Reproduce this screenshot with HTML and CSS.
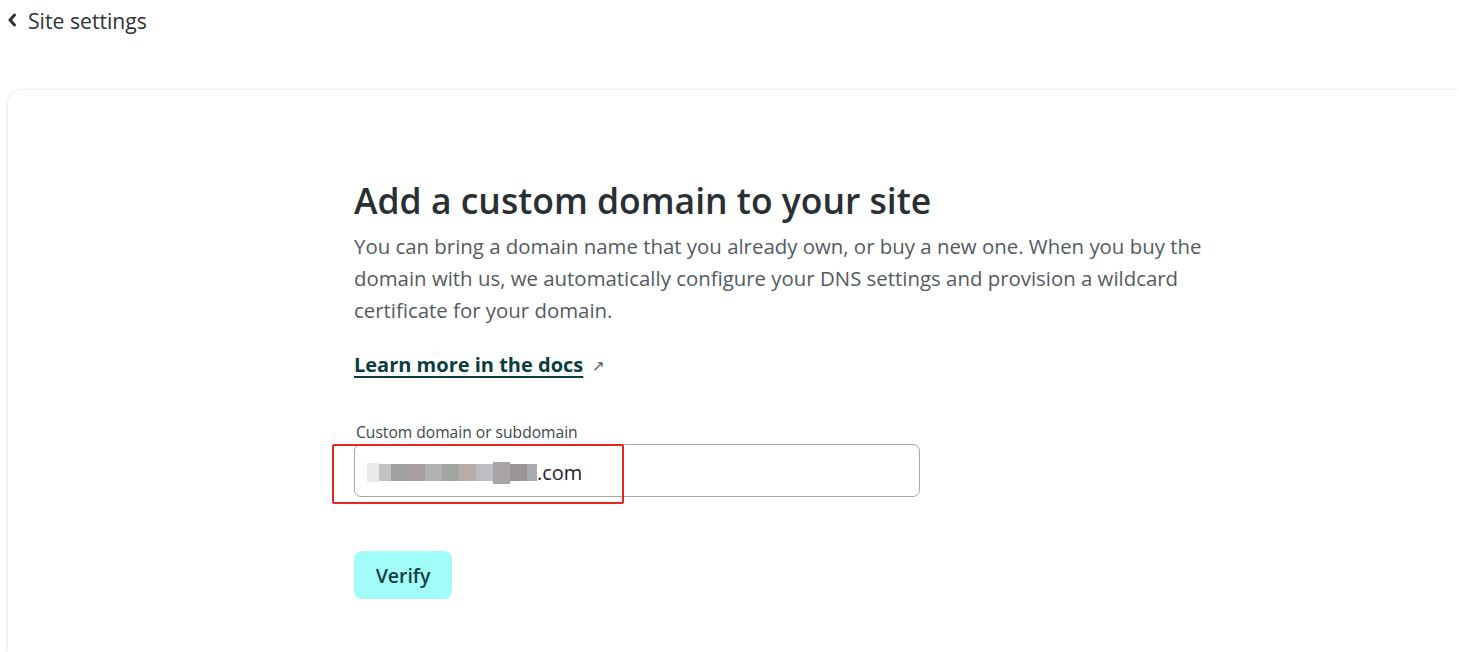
FILE: index.html
```html
<!DOCTYPE html>
<html>
<head>
<meta charset="utf-8">
<link rel="stylesheet" href="styles.css">
</head>
<body>
<header class="topbar">
  <a class="back" href="#">
    <svg class="chev" width="10" height="14" viewBox="0 0 10 14"><path d="M7.5 2 L3 7 L7.5 12" fill="none" stroke="#2d3338" stroke-width="3" stroke-linecap="round" stroke-linejoin="round"/></svg>
    <span>Site settings</span>
  </a>
</header>
<main class="card">
  <div class="content">
    <h1 class="title">Add a custom domain to your site</h1>
    <p class="desc">You can bring a domain name that you already own, or buy a new one. When you buy the domain with us, we automatically configure your DNS settings and provision a wildcard certificate for your domain.</p>
    <p class="docs"><a class="doclink" href="#">Learn more in the docs</a><span class="arrow">↗</span></p>
    <label class="label">Custom domain or subdomain</label>
    <div class="field">
      <div class="input"><span class="blur"><i class="b1"></i><i class="b2"></i><i class="b3"></i><i class="b4"></i><i class="b5"></i><i class="b6"></i><i class="b7"></i><i class="b8"></i><i class="b9"></i><i class="b10"></i><i class="b11"></i></span><span class="tld">.com</span></div>
      <div class="highlight"></div>
    </div>
    <button class="verify">Verify</button>
  </div>
</main>
</body>
</html>
```
FILE: styles.css
```css
html, body { margin: 0; padding: 0; background: #fff; }
body {
  font-family: "Open Sans", "Noto Sans", sans-serif;
  color: #2d3338;
  width: 1459px;
  height: 652px;
  overflow: hidden;
}
.topbar { height: 90px; box-sizing: border-box; padding: 5px 0 0 7px; }
.back { display: flex; align-items: center; gap: 11px; text-decoration: none; color: #2d3338; font-size: 21.2px; height: 30px; }
.chev { display: block; }
.card {
  margin-left: 8px;
  width: 1451px;
  height: 562px;
  background: #fff;
  border-radius: 14px 0 0 0;
  box-shadow: 0 0 2px rgba(0,0,0,0.12), -1px 0 4px rgba(0,0,0,0.06);
  box-sizing: border-box;
  padding: 84px 0 0 346px;
}
.content { width: 880px; }
.title { margin: 0 0 4px; font-size: 35.5px; font-weight: 600; line-height: 52px; color: #2a2f34; }
.desc { margin: 0; font-size: 20.4px; line-height: 32px; color: #545a61; width: 880px; }
.docs { margin: 24px 0 0; font-size: 20px; line-height: 30px; display: flex; align-items: center; }
.doclink { color: #0b3d3e; font-weight: 700; text-decoration: underline; text-decoration-thickness: 2px; text-underline-offset: 4px; }
.arrow { margin-left: 9px; font-size: 15px; color: #545a61; }
.label { display: block; margin-top: 41px; font-size: 15.6px; line-height: 22px; color: #40464d; padding-left: 2px; }
.field { position: relative; margin-top: 1px; width: 566px; }
.input {
  height: 53px; box-sizing: border-box; border: 1px solid #a4a9b0; border-radius: 7px;
  display: flex; align-items: center; padding: 4px 0 0 12px; font-size: 20px; color: #1f2328;
}
.blur { display: flex; align-items: center; height: 22px; position: relative; top: 0; }
.blur i { display: block; width: 17px; height: 17px; background: #a7a9a8; }
.blur .b1 { width: 12px; background: #ebe9e9; height: 19px; }
.blur .b2 { width: 12px; background: #c4c2c3; }
.blur .b3 { background: #9ea09e; }
.blur .b4 { background: #a89ea3; }
.blur .b5 { background: #b2b2b0; }
.blur .b6 { background: #a2a6a2; }
.blur .b7 { background: #b8ada7; }
.blur .b8 { background: #bcbec4; }
.blur .b9 { background: #a7a5a6; height: 22px; }
.blur .b10 { background: #9c9499; }
.blur .b11 { background: #a9acaf; width: 10px; }
.tld { margin-left: 0; }
.highlight {
  position: absolute; left: -22px; top: 0; width: 292px; height: 60px;
  border: 2px solid #e8261f; box-sizing: border-box; border-radius: 2px;
}
.verify {
  margin-top: 54px; width: 98px; height: 48px; border: none; border-radius: 8px;
  background: #a2fcf7; color: #143f45; font-family: inherit; font-size: 19.5px; font-weight: 600;
  padding: 0; cursor: pointer;
}
```
